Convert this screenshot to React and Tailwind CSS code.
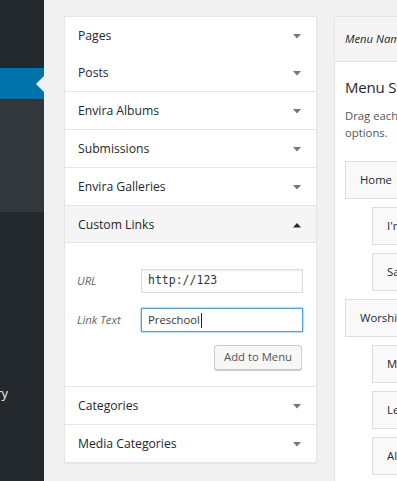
import React from "react";

const Down = () => (
  <svg width="8" height="5" viewBox="0 0 8 5" className="shrink-0">
    <polygon points="0,0 8,0 4,4.5" fill="#72777c" />
  </svg>
);
const Up = () => (
  <svg width="8" height="5" viewBox="0 0 8 5" className="shrink-0">
    <polygon points="0,4.5 8,4.5 4,0" fill="#23282d" />
  </svg>
);

function Section({ title, top = true }) {
  return (
    <div className={`${top ? "border-t border-[#e5e5e5] h-[38px]" : "h-[37px]"} flex items-center justify-between pl-[13px] pr-[15px] pt-[2px]`}>
      <span className="text-[12.2px] text-[#23282d]">{title}</span>
      <Down />
    </div>
  );
}

function Item({ label, sub }) {
  return (
    <div className={`${sub ? "ml-[27px]" : ""} h-[38px] border border-[#dfdfdf] bg-[#f9f9f9] flex items-center pl-[14px] text-[11.3px] text-[#23282d] whitespace-nowrap`}>
      {label}
    </div>
  );
}

export default function App() {
  return (
    <div
      className="flex w-[397px] h-[481px] overflow-hidden bg-[#f1f1f1]"
      style={{ fontFamily: '"Open Sans", "Noto Sans", sans-serif' }}
    >
      <aside className="w-[44px] shrink-0 bg-[#23282d] flex flex-col text-[#eeeeee] text-[13px]">
        <div className="h-[68px] shrink-0" />
        <div className="h-[31px] shrink-0 bg-[#0073aa] flex items-center justify-end">
          <svg width="8" height="16" viewBox="0 0 8 16">
            <polygon points="8,0 8,16 0,8" fill="#f1f1f1" />
          </svg>
        </div>
        <div className="h-[113px] shrink-0 bg-[#32373c]" />
        <div className="h-[171px] shrink-0" />
        <div className="w-[8px] shrink-0 overflow-hidden flex justify-end leading-[20px]">
          <span className="whitespace-nowrap">Gallery</span>
        </div>
        <div className="h-[73px] shrink-0" />
        <div className="w-[44px] shrink-0 overflow-hidden leading-[20px]">
          <span className="whitespace-nowrap">Settings</span>
        </div>
      </aside>

      <main className="flex-1 flex items-start pt-[16px] pl-[20px] gap-[17px]">
        <div className="w-[253px] shrink-0 bg-white border border-[#e5e5e5] shadow-[0_1px_1px_rgba(0,0,0,0.04)]">
          <Section title="Pages" top={false} />
          <Section title="Posts" top={false} />
          <Section title="Envira Albums" />
          <Section title="Submissions" />
          <Section title="Envira Galleries" />
          <div className="border-t border-b border-[#e5e5e5] bg-[#f5f5f5] h-[38px] flex items-center justify-between pl-[13px] pr-[15px] pt-[2px]">
            <span className="text-[12.2px] text-[#23282d]">Custom Links</span>
            <Up />
          </div>
          <div className="h-[143px] pt-[26px] pl-[12px] pr-[13px] flex flex-col">
            <div className="flex items-center">
              <span className="w-[64px] italic text-[11.3px] text-[#666]">URL</span>
              <div className="w-[162px] h-[24px] border border-[#dddddd] bg-white shadow-[inset_0_1px_2px_rgba(0,0,0,0.07)] flex items-center pl-[6px] text-[11.5px] text-[#32373c]" style={{ fontFamily: '"DejaVu Sans Mono", "Liberation Mono", monospace' }}>
                http://123
              </div>
            </div>
            <div className="flex items-center mt-[15px]">
              <span className="w-[64px] italic text-[11.3px] text-[#666]">Link Text</span>
              <div className="w-[162px] h-[24px] border border-[#5b9dd9] bg-white shadow-[0_0_2px_rgba(30,140,190,0.8)] flex items-center pl-[6px] text-[11.3px] text-[#32373c]">
                Preschool<span className="w-px h-[15px] bg-[#222] ml-[1px]" />
              </div>
            </div>
            <div className="flex justify-end mt-[13px] pr-[1px]">
              <div className="w-[88px] h-[25px] border border-[#cccccc] rounded-[3px] bg-[#f7f7f7] shadow-[0_1px_0_#cccccc] flex items-center justify-center text-[11.3px] text-[#555]">
                Add to Menu
              </div>
            </div>
          </div>
          <Section title="Categories" />
          <Section title="Media Categories" />
        </div>

        <div className="flex-1 self-stretch bg-white border-l border-t border-[#e5e5e5] overflow-hidden">
          <div className="h-[45px] bg-[#f5f5f5] border-b border-[#dddddd] flex items-center pl-[10px] italic text-[11.3px] text-[#23282d] whitespace-nowrap">
            Menu Name
          </div>
          <div className="pl-[10px] pt-[14px]">
            <div className="text-[15px] tracking-[-0.2px] text-[#23282d] whitespace-nowrap leading-[22px]">Menu Structure</div>
            <div className="mt-[9px] text-[11.3px] text-[#555] leading-[17px] whitespace-nowrap">
              Drag each item into the order you prefer.<br />options.
            </div>
            <div className="mt-[20px] flex flex-col gap-[8px]">
              <Item label="Home" />
              <Item label="I'm New" sub />
              <Item label="Salvation" sub />
              <Item label="Worship" />
              <Item label="Music" sub />
              <Item label="Leadership" sub />
              <Item label="Altar" sub />
            </div>
          </div>
        </div>
      </main>
    </div>
  );
}
